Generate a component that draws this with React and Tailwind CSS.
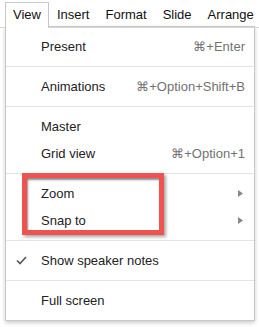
export default function App() {
  const Sep = () => <div className="my-[6px] h-px bg-[#e4e4e4]" />;
  const Row = ({ label, shortcut, sub, check }) => (
    <div className="flex h-[27px] items-center pr-[9px]">
      <div className="flex w-[35px] justify-center pr-[5px]">
        {check && (
          <svg width="11" height="9" viewBox="0 0 11 9">
            <polyline points="1,4.5 4,7.5 10,1" fill="none" stroke="#555" strokeWidth="1.6" />
          </svg>
        )}
      </div>
      <span className="flex-1 text-[#222]">{label}</span>
      {shortcut && <span className="text-[#727272]">{shortcut}</span>}
      {sub && (
        <svg className="mr-[2px]" width="5" height="7" viewBox="0 0 5 7">
          <polygon points="0,0 5,3.5 0,7" fill="#888" />
        </svg>
      )}
    </div>
  );
  return (
    <div className="relative h-[327px] w-[259px] overflow-hidden bg-white font-['Arial','Liberation_Sans',sans-serif] text-[13px] leading-[16px] text-[#222]">
      {/* menubar */}
      <div className="relative z-20 flex border-b border-[#d6d6d6] pl-[5px] pt-[2px]">
        <div className="-mb-px flex h-[26px] items-center border border-b-0 border-[#c8c8c8] bg-white px-[7px] pb-px text-[#111]">View</div>
        <div className="flex h-[25px] items-center border border-transparent px-[7px] text-[#111]">Insert</div>
        <div className="flex h-[25px] items-center border border-transparent px-[7px] text-[#111]">Format</div>
        <div className="flex h-[25px] items-center border border-transparent px-[7px] text-[#111]">Slide</div>
        <div className="flex h-[25px] items-center border border-transparent px-[7px] text-[#111]">Arrange</div>
      </div>

      {/* dropdown */}
      <div className="absolute left-[5px] top-[26px] z-10 w-[250px] border border-[#c8c8c8] bg-white py-[6px] shadow-[0_2px_4px_rgba(0,0,0,0.2)]">
        <Row label="Present" shortcut="⌘+Enter" />
        <Sep />
        <Row label="Animations" shortcut="⌘+Option+Shift+B" />
        <Sep />
        <Row label="Master" />
        <Row label="Grid view" shortcut="⌘+Option+1" />
        <Sep />
        <Row label="Zoom" sub />
        <Row label="Snap to" sub />
        <Sep />
        <Row label="Show speaker notes" check />
        <Sep />
        <Row label="Full screen" />
      </div>

      {/* annotation */}
      <div className="absolute left-[22px] top-[173px] z-30 h-[62px] w-[142px] border-[5px] border-[#f0524f] shadow-[2px_2px_3px_rgba(0,0,0,0.35),inset_1px_2px_2px_rgba(0,0,0,0.45)]" />
    </div>
  );
}
